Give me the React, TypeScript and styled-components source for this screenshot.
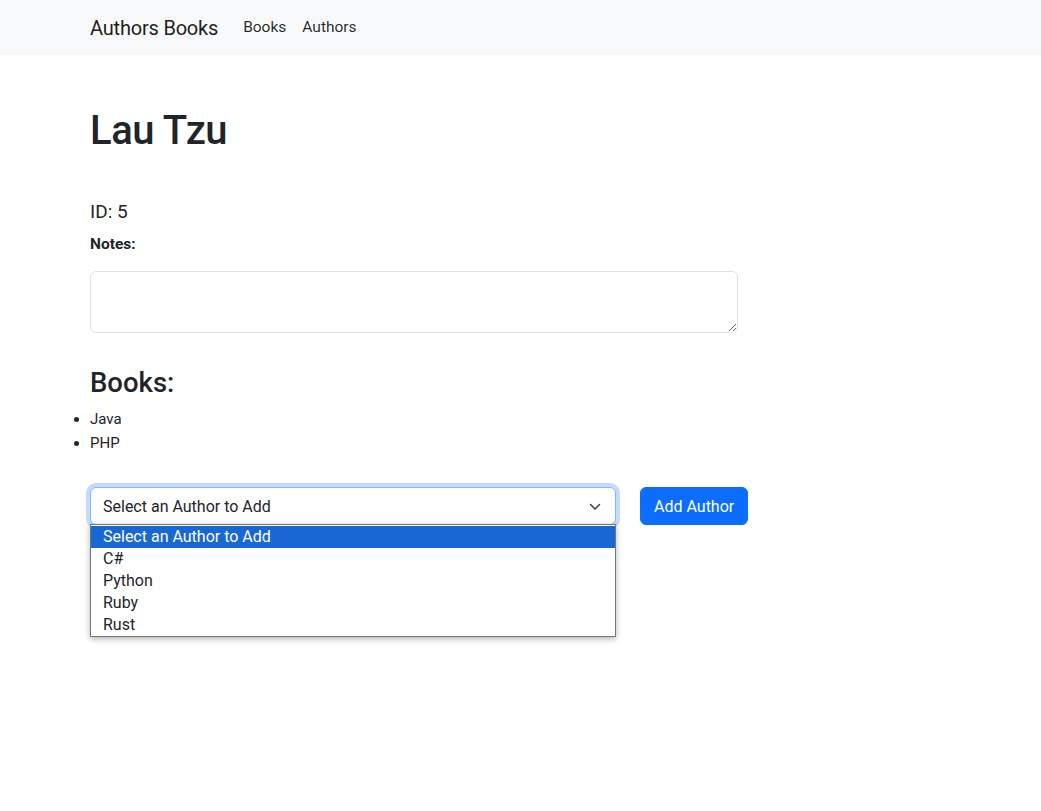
import React from "react";
import styled, { createGlobalStyle } from "styled-components";

const Global = createGlobalStyle`
  html, body { margin: 0; padding: 0; background: #fff; min-height: 100%; }
  body {
    font-family: Roboto, "Liberation Sans", sans-serif;
    color: #212529;
    font-size: 16px;
    line-height: 1.5;
  }
  #root { min-height: 100vh; }
  * { box-sizing: border-box; }
`;

const Page = styled.div`
  min-height: 100vh;
  display: flex;
  flex-direction: column;
`;

const Navbar = styled.nav`
  height: 55px;
  flex: none;
  background: #f8f9fa;
  display: flex;
  align-items: center;
  padding-left: 90px;
`;

const Brand = styled.a`
  font-size: 20px;
  color: rgba(0, 0, 0, 0.9);
  text-decoration: none;
  margin-right: 17px;
  padding: 5px 0;
  letter-spacing: -0.2px;
`;

const NavLinks = styled.div`
  display: flex;
  padding-top: 1px;
`;

const NavLink = styled.a`
  font-size: 15.5px;
  color: rgba(0, 0, 0, 0.85);
  text-decoration: none;
  padding: 8px 8px;
`;

const Main = styled.main`
  flex: 1;
  padding: 52px 0 0 90px;
  display: flex;
  flex-direction: column;
`;

const Title = styled.h1`
  font-size: 40px;
  font-weight: 500;
  line-height: 48px;
  letter-spacing: -0.4px;
  margin: 0 0 45px;
`;

const IdLine = styled.h5`
  font-size: 19px;
  font-weight: 400;
  line-height: 24px;
  margin: 0 0 8px;
`;

const Label = styled.label`
  font-size: 15.5px;
  font-weight: 700;
  line-height: 24px;
  margin-bottom: 15px;
`;

const TextArea = styled.textarea`
  width: 648px;
  height: 62px;
  border: 1px solid #dee2e6;
  border-radius: 6px;
  padding: 6px 12px;
  font-family: inherit;
  font-size: 16px;
  margin: 0 0 33px;
`;

const SectionTitle = styled.h3`
  font-size: 27.5px;
  font-weight: 500;
  line-height: 34px;
  margin: 0 0 7px;
`;

const BookList = styled.ul`
  margin: 0 0 32px;
  padding: 0;
  list-style: disc outside;
`;

const BookItem = styled.li`
  font-size: 15px;
  line-height: 24px;
`;

const AddRow = styled.div`
  display: flex;
  align-items: flex-start;
  gap: 24px;
`;

const SelectWrap = styled.div`
  position: relative;
  width: 526px;
`;

const SelectBox = styled.div`
  height: 38px;
  border: 1px solid #86b7fe;
  border-radius: 6px;
  box-shadow: 0 0 0 4px rgba(13, 110, 253, 0.25);
  display: flex;
  align-items: center;
  justify-content: space-between;
  padding: 1px 14px 0 12px;
  font-size: 16px;
  background: #fff;
`;

const ListBox = styled.ul`
  position: absolute;
  z-index: 10;
  left: 0;
  top: 37px;
  width: 100%;
  margin: 0;
  padding: 1px 0 0;
  list-style: none;
  background: #fff;
  border: 1px solid #767676;
  box-shadow: 0 2px 6px rgba(0, 0, 0, 0.3);
`;

const ListItem = styled.li<{ $active?: boolean }>`
  display: block;
  height: 22px;
  line-height: 22px;
  padding: 0 12px;
  font-size: 16px;
  background: ${(p) => (p.$active ? "#1967d2" : "#fff")};
  color: ${(p) => (p.$active ? "#fff" : "#212529")};
`;

const Button = styled.button`
  height: 38px;
  padding: 0 13px;
  border: 1px solid #0d6efd;
  background: #0d6efd;
  color: #fff;
  font-family: inherit;
  font-size: 16px;
  border-radius: 6px;
`;

const options = ["Select an Author to Add", "C#", "Python", "Ruby", "Rust"];

export default function App() {
  return (
    <Page>
      <Global />
      <Navbar>
        <Brand href="#">Authors Books</Brand>
        <NavLinks>
          <NavLink href="#">Books</NavLink>
          <NavLink href="#">Authors</NavLink>
        </NavLinks>
      </Navbar>
      <Main>
        <Title>Lau Tzu</Title>
        <IdLine>ID: 5</IdLine>
        <Label>Notes:</Label>
        <TextArea />
        <SectionTitle>Books:</SectionTitle>
        <BookList>
          <BookItem>Java</BookItem>
          <BookItem>PHP</BookItem>
        </BookList>
        <AddRow>
          <SelectWrap>
            <SelectBox>
              <span>Select an Author to Add</span>
              <svg width="12" height="8" viewBox="0 0 12 8">
                <path d="M1.5 1.5 6 6l4.5-4.5" fill="none" stroke="#343a40" strokeWidth="1.5" strokeLinecap="round" strokeLinejoin="round" />
              </svg>
            </SelectBox>
            <ListBox role="listbox">
              {options.map((o, i) => (
                <ListItem key={o} role="option" $active={i === 0}>
                  {o}
                </ListItem>
              ))}
            </ListBox>
          </SelectWrap>
          <Button>Add Author</Button>
        </AddRow>
      </Main>
    </Page>
  );
}
